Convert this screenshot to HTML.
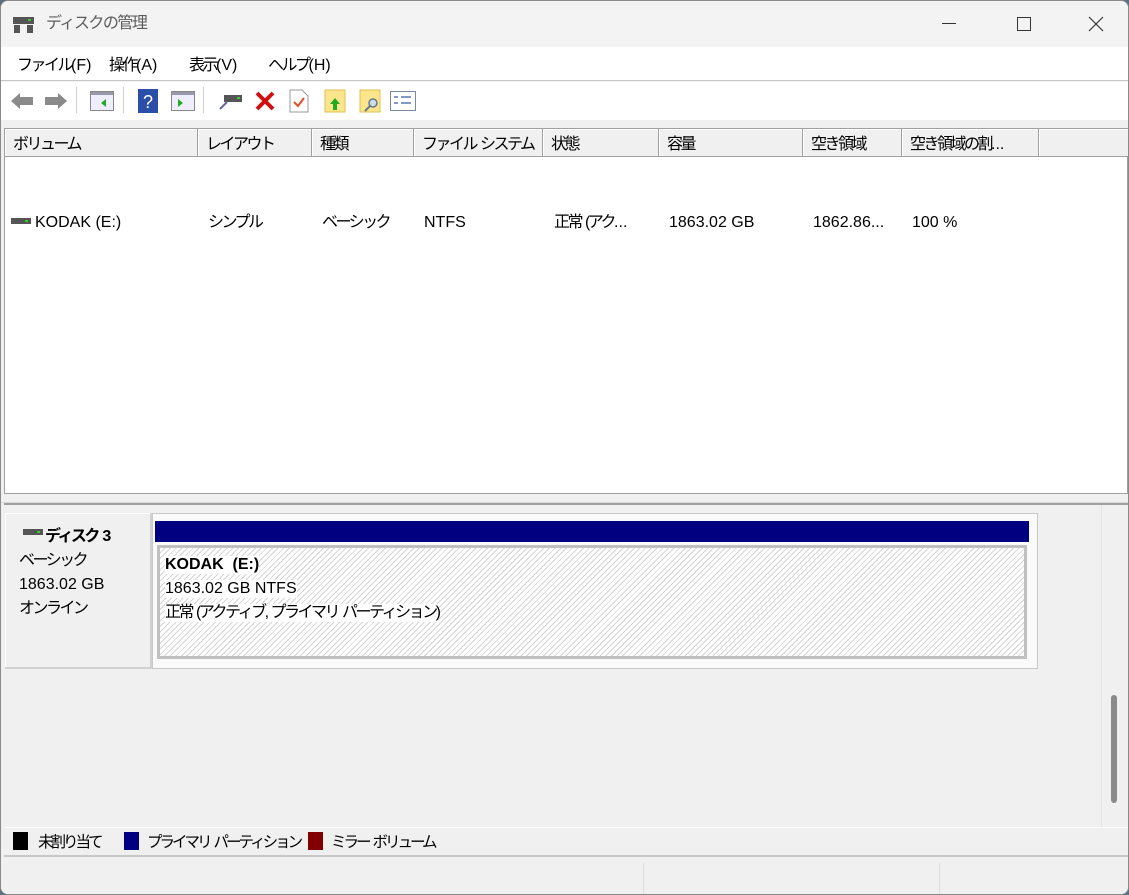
<!DOCTYPE html>
<html><head><meta charset="utf-8"><style>
*{margin:0;padding:0;box-sizing:border-box}
body{width:1129px;height:895px;overflow:hidden;background:#5a6f80;font-family:"Liberation Sans","Noto Sans CJK JP",sans-serif;color:#000;font-size:16px;line-height:18px}
i{font-style:normal;letter-spacing:-2.5px}
i.t{letter-spacing:-3px}
b.s{display:inline-block;width:4px}
.win{position:absolute;left:0;top:0;width:1129px;height:895px;background:#f0f0f0;border:1px solid #8a8a8a;border-radius:8px;overflow:hidden}
.a{position:absolute;white-space:nowrap}
.title{left:0;top:0;width:1129px;height:46px;background:#f3f3f3}
.menu{left:0;top:46px;width:1129px;height:34px;background:#fff;border-bottom:1px solid #c8c8c8}
.menu span{position:absolute;top:10px}
.tb{left:0;top:81px;width:1129px;height:38px;background:#fff}
.sep{position:absolute;top:5px;width:1px;height:26px;background:#d0d0d0}
.list{left:3px;top:127px;width:1124px;height:366px;background:#fff;border:1px solid #a0a0a0}
.hdr{position:absolute;top:0;height:28px;background:#f0f0f0;border-right:1px solid #a0a0a0;border-bottom:1px solid #a0a0a0;padding:7px 0 0 8px;box-shadow:inset 1px 1px 0 #fff;overflow:hidden;white-space:nowrap}
.cell{position:absolute;top:85px}
.lower{left:3px;top:502px;width:1124px;height:324px;background:#f0f0f0;border-top:2px solid #a0a0a0}
</style></head><body><div class="win">
<div class="a title">
 <svg class="a" style="left:12px;top:14px" width="22" height="20"><rect x="0" y="2" width="21" height="7" fill="#555"/><rect x="15" y="4" width="3" height="2" fill="#3c3"/><rect x="1" y="10" width="6" height="8" fill="#555"/><rect x="14" y="10" width="6" height="8" fill="#555"/></svg>
 <div class="a" style="left:45px;top:14px;color:#5c5c5c;letter-spacing:-1.5px">ディスクの管理</div>
 <div class="a" style="left:941px;top:22px;width:14px;height:1px;background:#333"></div>
 <div class="a" style="left:1016px;top:16px;width:14px;height:14px;border:1px solid #333"></div>
 <svg class="a" style="left:1087px;top:15px" width="16" height="16"><path d="M1 1L15 15M15 1L1 15" stroke="#333" stroke-width="1.2"/></svg>
</div>
<div class="a menu"><span style="left:16px"><i>ファイル</i>(F)</span><span style="left:108px"><i>操作</i>(A)</span><span style="left:188px"><i>表示</i>(V)</span><span style="left:267px"><i>ヘルプ</i>(H)</span></div>
<div class="a tb">
 <svg class="a" style="left:8px;top:8px" width="60" height="22"><path d="M2 11L11 3V7H24V15H11V19Z" fill="#8a8a8a"/><path d="M58 11L49 3V7H36V15H49V19Z" fill="#8a8a8a"/></svg>
 <div class="sep" style="left:75px"></div>
 <svg class="a" style="left:89px;top:9px" width="24" height="20"><rect x="0.5" y="0.5" width="23" height="19" fill="#eef" stroke="#888"/><rect x="1" y="1" width="22" height="3" fill="#99a"/><path d="M16 8L11 12L16 16Z" fill="#2a2"/></svg>
 <div class="sep" style="left:122px"></div>
 <svg class="a" style="left:137px;top:7px" width="20" height="24"><rect width="20" height="24" fill="#2b4fa8"/><text x="5" y="19" font-size="18" fill="#fff" font-family="Liberation Sans">?</text></svg>
 <svg class="a" style="left:170px;top:9px" width="24" height="20"><rect x="0.5" y="0.5" width="23" height="19" fill="#eef" stroke="#888"/><rect x="1" y="1" width="22" height="3" fill="#99a"/><path d="M7 8L12 12L7 16Z" fill="#2a2"/></svg>
 <div class="sep" style="left:202px"></div>
 <svg class="a" style="left:217px;top:9px" width="26" height="20"><rect x="6" y="4" width="18" height="7" fill="#555"/><rect x="19" y="6" width="3" height="2" fill="#3c3"/><path d="M2 18L9 11" stroke="#669" stroke-width="2"/></svg>
 <svg class="a" style="left:253px;top:8px" width="22" height="22"><path d="M3 3L19 19M19 3L3 19" stroke="#d01010" stroke-width="4"/></svg>
 <svg class="a" style="left:288px;top:7px" width="20" height="24"><path d="M1 1H13L19 7V23H1Z" fill="#fff" stroke="#999"/><path d="M5 13L9 17L15 9" stroke="#e05020" stroke-width="2" fill="none"/></svg>
 <svg class="a" style="left:323px;top:7px" width="22" height="24"><rect x="1" y="1" width="20" height="22" fill="#fce58a" stroke="#e0c050"/><path d="M11 9L16 15H13V21H9V15H6Z" fill="#2a2"/></svg>
 <svg class="a" style="left:358px;top:7px" width="22" height="24"><rect x="1" y="1" width="20" height="22" fill="#fce58a" stroke="#e0c050"/><circle cx="14" cy="14" r="4" fill="#cde" stroke="#678" stroke-width="1.5"/><path d="M11 17L6 22" stroke="#678" stroke-width="2"/></svg>
 <svg class="a" style="left:389px;top:9px" width="26" height="20"><rect x="0.5" y="0.5" width="25" height="19" fill="#fff" stroke="#7a8aa0"/><path d="M4 6H8M4 12H8M11 6H21M11 12H21" stroke="#5a7ab0" stroke-width="1.5"/></svg>
</div>
<div class="a list">
 <div class="hdr" style="left:0;width:193px"><i>ボリューム</i></div>
 <div class="hdr" style="left:193px;width:114px"><i>レイアウト</i></div>
 <div class="hdr" style="left:307px;width:102px"><i>種類</i></div>
 <div class="hdr" style="left:409px;width:129px"><i>ファイル<b class="s"></b>システム</i></div>
 <div class="hdr" style="left:538px;width:116px"><i>状態</i></div>
 <div class="hdr" style="left:654px;width:144px"><i>容量</i></div>
 <div class="hdr" style="left:798px;width:99px"><i>空き領域</i></div>
 <div class="hdr" style="left:897px;width:137px"><i>空き領域の割</i>...</div>
 <div class="hdr" style="left:1034px;width:90px;border-right:none"></div>
 <svg class="a" style="left:6px;top:88px" width="22" height="8"><rect width="20" height="6" y="1" fill="#555"/><rect x="14" y="3" width="3" height="2" fill="#3c3"/></svg>
 <div class="cell" style="left:30px">KODAK (E:)</div>
 <div class="cell" style="left:203px"><i>シンプル</i></div>
 <div class="cell" style="left:317px"><i>ベーシック</i></div>
 <div class="cell" style="left:419px">NTFS</div>
 <div class="cell" style="left:549px"><i>正常<b class="s"></b>(アク</i>...</div>
 <div class="cell" style="left:664px">1863.02 GB</div>
 <div class="cell" style="left:808px">1862.86...</div>
 <div class="cell" style="left:907px">100 %</div>
</div>
<div class="a" style="left:0;top:493px;width:1129px;height:9px;background:#f0f0f0;border-bottom:1px solid #d8d8d8"></div>
<div class="a lower">
 <div class="a" style="left:1px;top:8px;width:147px;height:156px;background:#f0f0f0;border-right:2px solid #d0d0d0;border-bottom:2px solid #d0d0d0;box-shadow:inset 1px 1px 0 #fff"></div>
 <svg class="a" style="left:19px;top:23px" width="22" height="8"><rect width="20" height="6" y="1" fill="#555"/><rect x="14" y="3" width="3" height="2" fill="#3c3"/></svg>
 <div class="a" style="left:41px;top:23px;font-weight:bold"><i>ディスク</i> 3</div>
 <div class="a" style="left:15px;top:47px"><i>ベーシック</i></div>
 <div class="a" style="left:15px;top:71px">1863.02 GB</div>
 <div class="a" style="left:15px;top:95px"><i>オンライン</i></div>
 <div class="a" style="left:148px;top:8px;width:886px;height:156px;background:#fafafa;border:1px solid #c8c8c8"></div>
 <div class="a" style="left:151px;top:16px;width:874px;height:21px;background:#000080"></div>
 <div class="a" style="left:153px;top:40px;width:870px;height:114px;border:3px solid #c0c0c0;background:repeating-linear-gradient(135deg,#fff 0 3px,#d4d4d4 3px 4px)"></div>
 <div class="a" style="left:161px;top:51px;font-weight:bold;background:#fff">KODAK&nbsp; (E:)</div>
 <div class="a" style="left:161px;top:75px;background:#fff">1863.02 GB NTFS</div>
 <div class="a" style="left:161px;top:99px;background:#fff"><i>正常<b class="s"></b>(アクティブ,<b class="s"></b>プライマリ<b class="s"></b>パーティション)</i></div>
 <div class="a" style="left:1097px;top:0;width:1px;height:324px;background:#e4e4e4"></div>
 <div class="a" style="left:1107px;top:190px;width:6px;height:108px;background:#8a8a8a;border-radius:3px"></div>
</div>
<div class="a" style="left:3px;top:826px;width:1124px;height:30px;background:#f0f0f0;border-top:1px solid #fff;border-bottom:2px solid #c8c8c8"></div>
<div class="a" style="left:12px;top:831px;width:15px;height:18px;background:#000"></div>
<div class="a" style="left:37px;top:833px;font-size:15.5px"><i class="t">未割り当て</i></div>
<div class="a" style="left:123px;top:831px;width:15px;height:18px;background:#000080"></div>
<div class="a" style="left:146px;top:833px;font-size:15.5px"><i class="t">プライマリ<b class="s"></b>パーティション</i></div>
<div class="a" style="left:307px;top:831px;width:15px;height:18px;background:#800000"></div>
<div class="a" style="left:330px;top:833px;font-size:15.5px"><i class="t">ミラー<b class="s"></b>ボリューム</i></div>
<div class="a" style="left:0;top:858px;width:1129px;height:37px;background:#f0f0f0"></div>
<div class="a" style="left:642px;top:862px;width:1px;height:33px;background:#dcdcdc"></div>
<div class="a" style="left:938px;top:862px;width:1px;height:33px;background:#dcdcdc"></div>
</div></body></html>
